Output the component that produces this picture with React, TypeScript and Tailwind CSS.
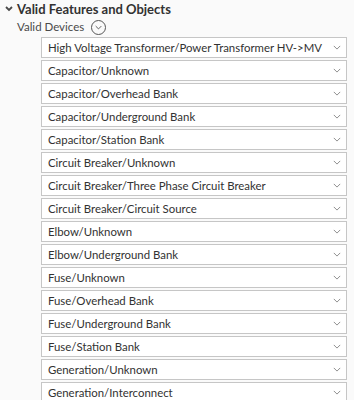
const devices = [
  "High Voltage Transformer/Power Transformer HV->MV",
  "Capacitor/Unknown",
  "Capacitor/Overhead Bank",
  "Capacitor/Underground Bank",
  "Capacitor/Station Bank",
  "Circuit Breaker/Unknown",
  "Circuit Breaker/Three Phase Circuit Breaker",
  "Circuit Breaker/Circuit Source",
  "Elbow/Unknown",
  "Elbow/Underground Bank",
  "Fuse/Unknown",
  "Fuse/Overhead Bank",
  "Fuse/Underground Bank",
  "Fuse/Station Bank",
  "Generation/Unknown",
  "Generation/Interconnect",
];

function Chevron({ className }: { className?: string }) {
  return (
    <svg viewBox="0 0 10 6" className={className} fill="none" stroke="currentColor" strokeWidth="1.2">
      <path d="M1 1l4 4 4-4" />
    </svg>
  );
}

export default function App() {
  return (
    <div className="w-[354px] h-[400px] overflow-hidden bg-[#fafafa] text-[#323232] font-['Lato',sans-serif]">
      {/* section header */}
      <div className="flex items-center h-[17px] pl-[5px] pt-[1px]">
        <svg viewBox="0 0 8 6" className="w-[8px] h-[6px] text-[#4a4a4a]" fill="none" stroke="currentColor" strokeWidth="1.8">
          <path d="M1 1l3 3 3-3" />
        </svg>
        <span className="ml-[4px] text-[13px] font-bold leading-none">Valid Features and Objects</span>
      </div>

      <div className="flex items-center h-[20px] pl-[17px]">
        <span className="text-[11.5px] text-[#4a4a4a] leading-none">Valid Devices</span>
        <span className="ml-[7px] w-[15px] h-[15px] rounded-full border border-[#555] flex items-center justify-center">
          <Chevron className="w-[7px] h-[5px] text-[#444]" />
        </span>
      </div>

      <div className="flex flex-col gap-[2px] ml-[41px] w-[306px]">
        {devices.map((d) => (
          <div
            key={d}
            className="h-[21px] shrink-0 bg-white border border-[#c6c6c6] flex items-center justify-between pl-[6px] pr-[5px]"
          >
            <span className="text-[11.4px] leading-none whitespace-nowrap">{d}</span>
            <Chevron className="w-[8px] h-[5px] text-[#8a8a8a]" />
          </div>
        ))}
      </div>
    </div>
  );
}
